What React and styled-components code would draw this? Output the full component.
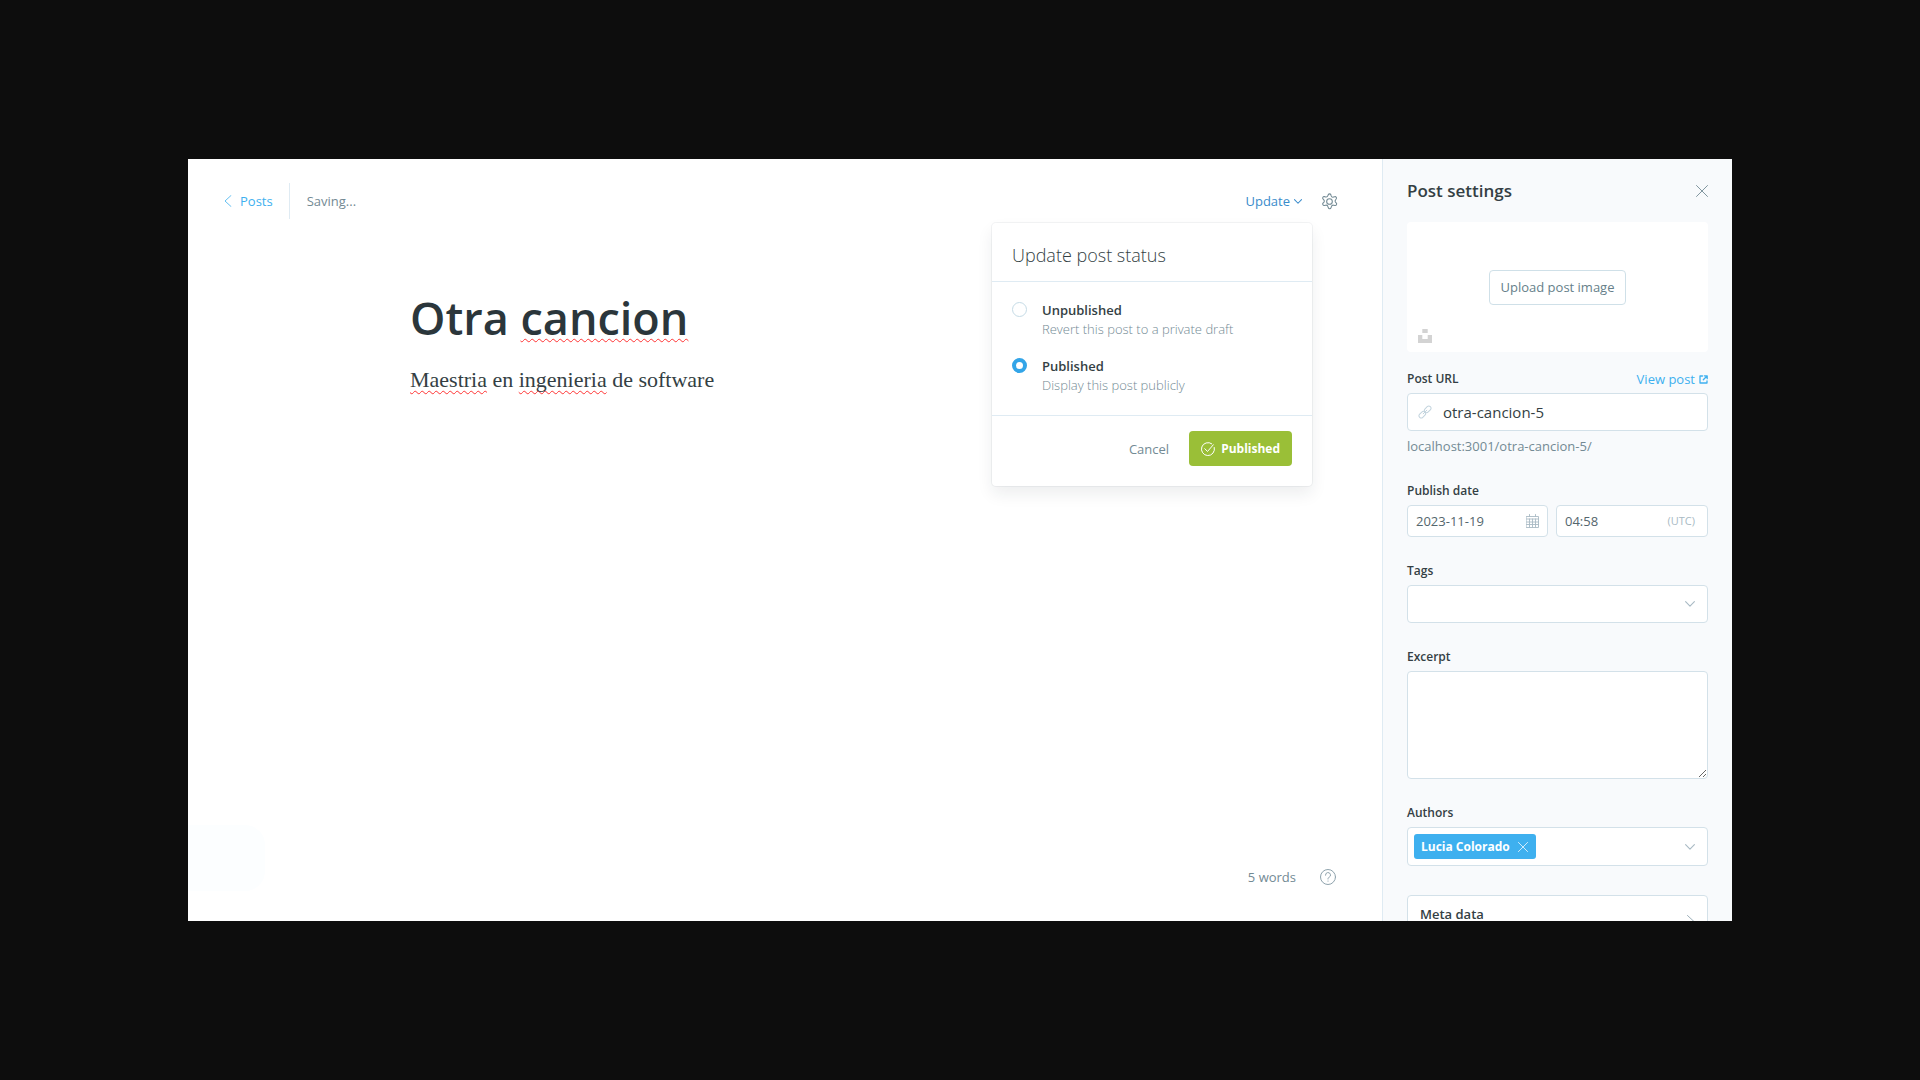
import React, { useState } from "react";
import styled, { createGlobalStyle } from "styled-components";

const GlobalStyle = createGlobalStyle`
  *, *::before, *::after { box-sizing: border-box; }
  html, body { margin: 0; background: #0d0d0d; }
  body {
    font-family: "Open Sans", "Noto Sans", sans-serif;
    font-size: 13px;
    line-height: 18px;
    color: #343f44;
  }
  button, input, textarea, select { font: inherit; color: inherit; margin: 0; }
  h1, h2, p { margin: 0; }
  svg { display: block; flex: none; }
`;

const Page = styled.div`
  display: flex;
  height: 100vh;
  padding: 159px 188px;
`;

const Frame = styled.div`
  display: flex;
  flex: 1;
  min-width: 0;
  overflow: hidden;
  background: #fff;
`;

const Main = styled.main`
  display: flex;
  flex: 1;
  flex-direction: column;
  min-width: 0;
`;

const Toolbar = styled.header`
  display: flex;
  align-items: center;
  justify-content: space-between;
  padding: 24px 44px 0 36px;
`;

const ToolbarGroup = styled.div`
  display: flex;
  align-items: center;
  gap: ${(p) => p.$gap || 0}px;
  height: 36px;
`;

const BackLink = styled.a`
  display: flex;
  align-items: center;
  gap: 8px;
  height: 36px;
  padding-right: 16px;
  border-right: 1px solid #dfebf3;
  color: #3eb0ef;
  text-decoration: none;
`;

const SaveStatus = styled.span`
  padding-left: 17px;
  color: #738a94;
`;

const PlainButton = styled.button`
  display: flex;
  align-items: center;
  padding: 0;
  border: 0;
  background: none;
  color: ${(p) => p.$color || "#738a94"};
  cursor: pointer;
`;

const MenuAnchor = styled.div`
  position: relative;
  padding: 0 10px;
`;

const UpdateButton = styled(PlainButton)`
  gap: 4px;
  height: 36px;
`;

const Menu = styled.form`
  position: absolute;
  z-index: 2;
  top: calc(100% + 4px);
  right: 0;
  width: 320px;
  border-radius: 4px;
  background: #fff;
  box-shadow: 0 0 0 1px rgba(99, 114, 130, 0.08), 0 8px 16px rgba(27, 39, 51, 0.08);
`;

const MenuTitle = styled.h2`
  padding: 22px 20px 16px;
  border-bottom: 1px solid #dfebf3;
  font-size: 18px;
  font-weight: 300;
  line-height: 20px;
`;

const MenuBody = styled.div`
  display: grid;
  gap: 18px;
  padding: 19px 20px 20px;
  border-bottom: 1px solid #dfebf3;
`;

const Option = styled.label`
  display: flex;
  align-items: flex-start;
  gap: 15px;
  cursor: pointer;
`;

const Radio = styled.input`
  appearance: none;
  flex: none;
  width: 15px;
  height: 15px;
  margin: 1px 0 0 !important;
  border: 1px solid #c5dbe6;
  border-radius: 50%;
  background: #fff;
  &:checked {
    border: 4px solid #33a5e8;
  }
`;

const OptionText = styled.span`
  display: grid;
  line-height: 19px;
`;

const OptionName = styled.span`
  font-weight: 600;
`;

const OptionNote = styled.span`
  font-size: 13px;
  font-weight: 300;
  color: #738a94;
`;

const MenuFooter = styled.div`
  display: flex;
  align-items: center;
  justify-content: flex-end;
  gap: 20px;
  padding: 15px 20px 20px;
`;

const PublishButton = styled.button`
  display: flex;
  align-items: center;
  gap: 6px;
  height: 35px;
  padding: 0 12px;
  border: 0;
  border-radius: 4px;
  background: #9abf37;
  color: #fff;
  font-size: 12px;
  font-weight: 700;
  cursor: pointer;
`;

const Editor = styled.article`
  flex: 1;
  width: 100%;
  max-width: 750px;
  margin: 0 auto;
  padding-top: 70px;
`;

const PostTitle = styled.h1`
  font-size: 45px;
  font-weight: 600;
  line-height: 58px;
  color: #2b363b;
`;

const PostBody = styled.p`
  padding-top: 18px;
  font-family: "Liberation Serif", serif;
  font-size: 22px;
  line-height: 30px;
`;

const Misspelt = styled.span`
  text-decoration: underline wavy #f33 1px;
  text-decoration-skip-ink: none;
  text-underline-offset: 3px;
`;

const StatusBar = styled.footer`
  display: flex;
  align-items: flex-end;
  justify-content: space-between;
  padding: 0 46px 30px 0;
`;

const StatusPatch = styled.div`
  width: 77px;
  height: 66px;
  border-radius: 0 20px 20px 0;
  background: #fcfeff;
`;

const StatusInfo = styled.div`
  display: flex;
  align-items: center;
  gap: 24px;
  height: 28px;
  color: #738a94;
`;

const Sidebar = styled.aside`
  flex: none;
  width: 350px;
  padding: 20px 24px 0;
  overflow: hidden;
  border-left: 1px solid #dfebf3;
  background: #f8fafc;
`;

const SidebarHeader = styled.div`
  display: flex;
  align-items: center;
  justify-content: space-between;
  padding-bottom: 19px;
`;

const SidebarTitle = styled.h2`
  font-size: 17px;
  font-weight: 600;
  line-height: 24px;
`;

const ImageBox = styled.div`
  display: grid;
  grid-template-rows: 1fr auto 1fr;
  height: 130px;
  margin-bottom: 18px;
  padding: 9px 11px;
  border-radius: 4px;
  background: #fff;
`;

const UploadButton = styled.button`
  grid-row: 2;
  justify-self: center;
  height: 35px;
  padding: 0 11px;
  border: 1px solid #cfe0e8;
  border-radius: 4px;
  background: #fff;
  color: #667f8a;
  cursor: pointer;
`;

const UnsplashButton = styled(PlainButton)`
  grid-row: 3;
  align-self: end;
  justify-self: start;
`;

const Field = styled.div`
  display: grid;
  gap: 5px;
  margin-bottom: 25px;
`;

const FieldHead = styled.div`
  display: flex;
  justify-content: space-between;
`;

const Label = styled.label`
  font-size: 12px;
  font-weight: 600;
`;

const ViewLink = styled.a`
  display: flex;
  align-items: center;
  gap: 4px;
  color: #3eb0ef;
  text-decoration: none;
`;

const Help = styled.p`
  padding: 1px 0 2px;
  color: #738a94;
`;

const Control = styled.div`
  display: flex;
  align-items: center;
  gap: ${(p) => p.$gap || 0}px;
  height: ${(p) => p.$height || 38}px;
  padding: ${(p) => p.$padding || "0 12px"};
  border: 1px solid #d3e1e9;
  border-radius: 4px;
  background: #fff;
  color: #a9bac4;
`;

const TextInput = styled.input`
  flex: 1;
  width: 100%;
  min-width: 0;
  padding: 0;
  border: 0;
  outline: 0;
  background: none;
  color: ${(p) => (p.$large ? "#343f44" : "#54666d")};
  font-size: ${(p) => (p.$large ? 15 : 13)}px;
`;

const DateRow = styled.div`
  display: grid;
  grid-template-columns: 141fr 152fr;
  gap: 8px;
`;

const Zone = styled.span`
  font-size: 11px;
`;

const Picker = styled.select`
  appearance: none;
  flex: 1;
  min-width: 0;
  height: 100%;
  border: 0;
  outline: 0;
  background: none;
`;

const Excerpt = styled.textarea`
  display: block;
  width: 100%;
  height: 108px;
  padding: 8px 12px;
  border: 1px solid #d3e1e9;
  border-radius: 4px;
  outline: 0;
  background: #fff;
  resize: vertical;
`;

const Chip = styled.span`
  display: flex;
  align-items: center;
  gap: 8px;
  height: 25px;
  padding: 0 8px 0 7px;
  border-radius: 3px;
  background: #3eb0ef;
  color: #fff;
  font-size: 12px;
  font-weight: 700;
`;

const MetaButton = styled.button`
  display: flex;
  align-items: center;
  justify-content: space-between;
  width: 100%;
  height: 54px;
  margin-top: 29px;
  padding: 0 12px;
  border: 1px solid #d3e1e9;
  border-radius: 4px;
  background: #fff;
  font-weight: 600;
`;

const MetaName = styled.span`
  padding-bottom: 16px;
`;

const Stroke = ({ w, h, box, width = 1, color = "currentColor", children }) => (
  <svg width={w} height={h} viewBox={box || `0 0 ${w} ${h}`} fill="none" stroke={color}
    strokeWidth={width} strokeLinecap="round" strokeLinejoin="round" aria-hidden="true">
    {children}
  </svg>
);

const ChevronLeft = () => <Stroke w={8} h={12} width={0.8}><path d="M7 .5 1 6l6 5.500" /></Stroke>;
const ChevronDown = ({ w = 10, h = 6, width = 1.1 }) => (
  <Stroke w={w} h={h} box="0 0 10 6" width={width}><path d="M.6.6 5 5.200 9.400.6" /></Stroke>
);
const ChevronRight = () => <Stroke w={8} h={14} color="#9baeb8"><path d="M.5.5 7.500 7l-7 6.500" /></Stroke>;
const Cross = ({ size = 12, width = 0.9 }) => (
  <Stroke w={size} h={size} box="0 0 12 12" width={width}><path d="m.5.5 11 11m0-11-11 11" /></Stroke>
);
const Gear = () => (
  <Stroke w={17} h={17} box="0 0 24 24" width={1.5}>
    <circle cx="12" cy="12" r="4" />
    <path d="M13.900 2.500l.5 1.600a2.600 2.600 0 0 0 3.300 1.600l1.700-.5a2 2 0 0 1 2.200 3l-1 1.400a2.600 2.600 0 0 0 0 3.500l1.100 1.300a2 2 0 0 1-2 3.200l-1.800-.4a2.600 2.600 0 0 0-3.100 1.800l-.6 1.700a2 2 0 0 1-3.900 0L9.700 19a2.600 2.600 0 0 0-3.100-1.800l-1.800.4a2 2 0 0 1-2-3.200l1.200-1.300a2.600 2.600 0 0 0 0-3.500L2.800 8.300a2 2 0 0 1 2-3.200l1.800.4a2.600 2.600 0 0 0 3.100-1.700l.6-1.500a2 2 0 0 1 3.600.2z" />
  </Stroke>
);
const CheckCircle = () => (
  <Stroke w={14} h={14}>
    <path d="M13.300 5.500A6.500 6.500 0 1 1 10.800 1.800" />
    <path d="m3.800 6.700 2.700 2.800 5.800-6.700" />
  </Stroke>
);
const Unsplash = () => (
  <svg width="14" height="14" viewBox="0 0 14 14" fill="#d3d3d3" aria-hidden="true">
    <path d="M4.300 0h5.400v4H4.300zM0 6h4.300v4h5.400V6H14v8H0z" />
  </svg>
);
const External = () => (
  <Stroke w={9} h={9} width={1.3}>
    <path d="M3.500 1H1v7h7V5.800" />
    <path d="M5.300.8h2.900v2.900M8 1 4.300 4.700" />
  </Stroke>
);
const LinkIcon = () => (
  <Stroke w={14} h={14} box="0 0 14 14" width={1} color="#c3d4de">
    <rect x="-3.700" y="-2.200" width="7.400" height="4.400" rx="2.200" transform="translate(4.300 9.700) rotate(-45)" />
    <rect x="-3.700" y="-2.200" width="7.400" height="4.400" rx="2.200" transform="translate(9.700 4.300) rotate(-45)" />
    <path d="m5.200 8.800 3.600-3.600" />
  </Stroke>
);
const Calendar = () => (
  <Stroke w={13} h={14} width={0.9}>
    <path d="M.5 2.500h12v11H.5zM.5 5h12M3.500 5v8M6.500 5v8M9.500 5v8M.5 8h12M.5 10.500h12M3.500.5v2M9.500.5v2" />
  </Stroke>
);
const HelpCircle = () => (
  <Stroke w={16} h={16}>
    <circle cx="8" cy="8" r="7.500" />
    <path d="M5.500 6.200a2.500 2.500 0 1 1 3.600 2.100C8.300 8.700 8 9 8 10M8 12v.2" />
  </Stroke>
);

export default function App() {
  const [status, setStatus] = useState("published");
  return (
    <Page>
      <GlobalStyle />
      <Frame>
        <Main>
          <Toolbar>
            <ToolbarGroup>
              <BackLink href="#posts"><ChevronLeft />Posts</BackLink>
              <SaveStatus>Saving...</SaveStatus>
            </ToolbarGroup>
            <ToolbarGroup $gap={9}>
              <MenuAnchor>
                <UpdateButton type="button" $color="#3a8ccb">Update<ChevronDown w={8} h={5} width={1.3} /></UpdateButton>
                <Menu onSubmit={(e) => e.preventDefault()}>
                  <MenuTitle>Update post status</MenuTitle>
                  <MenuBody>
                    <Option>
                      <Radio type="radio" name="status" checked={status === "draft"} onChange={() => setStatus("draft")} />
                      <OptionText>
                        <OptionName>Unpublished</OptionName>
                        <OptionNote>Revert this post to a private draft</OptionNote>
                      </OptionText>
                    </Option>
                    <Option>
                      <Radio type="radio" name="status" checked={status === "published"} onChange={() => setStatus("published")} />
                      <OptionText>
                        <OptionName>Published</OptionName>
                        <OptionNote>Display this post publicly</OptionNote>
                      </OptionText>
                    </Option>
                  </MenuBody>
                  <MenuFooter>
                    <PlainButton type="button">Cancel</PlainButton>
                    <PublishButton type="submit"><CheckCircle />Published</PublishButton>
                  </MenuFooter>
                </Menu>
              </MenuAnchor>
              <PlainButton type="button" aria-label="Settings"><Gear /></PlainButton>
            </ToolbarGroup>
          </Toolbar>

          <Editor>
            <PostTitle>Otra <Misspelt>cancion</Misspelt></PostTitle>
            <PostBody>
              <Misspelt>Maestria</Misspelt> en <Misspelt>ingenieria</Misspelt> de software
            </PostBody>
          </Editor>

          <StatusBar>
            <StatusPatch />
            <StatusInfo>
              <span>5 words</span>
              <PlainButton type="button" aria-label="Help" $color="#8fa3ad"><HelpCircle /></PlainButton>
            </StatusInfo>
          </StatusBar>
        </Main>

        <Sidebar>
          <SidebarHeader>
            <SidebarTitle>Post settings</SidebarTitle>
            <PlainButton type="button" aria-label="Close"><Cross /></PlainButton>
          </SidebarHeader>

          <ImageBox>
            <UploadButton type="button">Upload post image</UploadButton>
            <UnsplashButton type="button" aria-label="Unsplash"><Unsplash /></UnsplashButton>
          </ImageBox>

          <Field>
            <FieldHead>
              <Label htmlFor="url">Post URL</Label>
              <ViewLink href="#view">View post<External /></ViewLink>
            </FieldHead>
            <Control $gap={11} $padding="0 10px">
              <LinkIcon />
              <TextInput id="url" $large defaultValue="otra-cancion-5" />
            </Control>
            <Help>localhost:3001/otra-cancion-5/</Help>
          </Field>

          <Field>
            <Label htmlFor="date">Publish date</Label>
            <DateRow>
              <Control $height={32} $padding="0 8px">
                <TextInput id="date" defaultValue="2023-11-19" />
                <Calendar />
              </Control>
              <Control $height={32} $padding="0 12px 0 8px">
                <TextInput aria-label="Publish time" defaultValue="04:58" />
                <Zone>(UTC)</Zone>
              </Control>
            </DateRow>
          </Field>

          <Field>
            <Label htmlFor="tags">Tags</Label>
            <Control>
              <Picker id="tags"><option></option></Picker>
              <ChevronDown />
            </Control>
          </Field>

          <Field>
            <Label htmlFor="excerpt">Excerpt</Label>
            <Excerpt id="excerpt" />
          </Field>

          <Field>
            <Label htmlFor="authors">Authors</Label>
            <Control $height={39} $padding="0 12px 0 6px">
              <Chip>
                Lucia Colorado
                <PlainButton type="button" aria-label="Remove Lucia Colorado" $color="#fff"><Cross size={10} /></PlainButton>
              </Chip>
              <Picker id="authors"><option></option></Picker>
              <ChevronDown />
            </Control>
          </Field>

          <MetaButton type="button"><MetaName>Meta data</MetaName><ChevronRight /></MetaButton>
        </Sidebar>
      </Frame>
    </Page>
  );
}
